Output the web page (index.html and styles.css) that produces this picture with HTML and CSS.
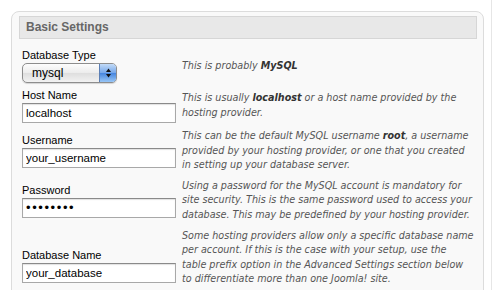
FILE: index.html
```html
<!DOCTYPE html>
<html lang="en">
<head>
    <meta charset="UTF-8">
    <title>Installation - Database Configuration</title>
    <link rel="stylesheet" href="styles.css">
</head>
<body>
    <div class="page">
        <div class="panel">
            <h2 class="panel-title">Basic Settings</h2>

            <div class="settings">
                <div class="setting-row">
                    <div class="field">
                        <label>Database Type</label>
                        <div class="select">
                            <span class="select-value">mysql</span>
                            <span class="stepper">
                                <svg width="7" height="12" viewBox="0 0 7 12">
                                    <path d="M3.5 1.5 L6 5 L1 5 Z" fill="#111"/>
                                    <path d="M3.5 10.5 L6 7 L1 7 Z" fill="#111"/>
                                </svg>
                            </span>
                        </div>
                    </div>
                    <p class="note">This is probably <b>MySQL</b></p>
                </div>

                <div class="setting-row">
                    <div class="field">
                        <label>Host Name</label>
                        <input class="text-input" type="text" value="localhost">
                    </div>
                    <p class="note">This is usually <b>localhost</b> or a host name provided by the hosting provider.</p>
                </div>

                <div class="setting-row">
                    <div class="field">
                        <label>Username</label>
                        <input class="text-input" type="text" value="your_username">
                    </div>
                    <p class="note">This can be the default MySQL username <b>root</b>, a username provided by your hosting provider, or one that you created in setting up your database server.</p>
                </div>

                <div class="setting-row">
                    <div class="field">
                        <label>Password</label>
                        <input class="text-input password" type="password" value="password">
                    </div>
                    <p class="note">Using a password for the MySQL account is mandatory for site security. This is the same password used to access your database. This may be predefined by your hosting provider.</p>
                </div>

                <div class="setting-row row-low">
                    <div class="field">
                        <label>Database Name</label>
                        <input class="text-input" type="text" value="your_database">
                    </div>
                    <p class="note">Some hosting providers allow only a specific database name per account. If this is the case with your setup, use the<br>table prefix option in the Advanced Settings section below to differentiate more than one Joomla! site.</p>
                </div>
            </div>
        </div>
    </div>
</body>
</html>
```

FILE: styles.css
```css
body {
    margin: 0;
    padding: 0;
    background-color: #fff;
    font-family: 'Liberation Sans', Arial, sans-serif;
    overflow: hidden;
}

.page {
    width: 492px;
    height: 290px;
    border-right: 1px solid #e6e6e6;
    padding: 11px 0 0 11px;
    box-sizing: border-box;
}

.panel {
    width: 473px;
    height: 400px;
    border: 1px solid #dcdcdc;
    border-radius: 8px;
    background-color: #f9f9f9;
    padding: 4px 6px 0 7px;
    box-sizing: border-box;
}

.panel-title {
    margin: 0;
    height: 23px;
    line-height: 21px;
    padding-left: 6px;
    border: 1px solid #d6d6d6;
    background-color: #e8e8e8;
    box-sizing: border-box;
    font-size: 12px;
    font-weight: bold;
    color: #666;
}

/* rows: label + field on the left, help text on the right */
.settings {
    display: flex;
    flex-direction: column;
    gap: 6px;
    margin-top: 10px;
    padding-left: 3px;
}

.setting-row {
    display: flex;
    align-items: center;
}

.field {
    width: 160px;
    flex-shrink: 0;
}

.row-low .field {
    padding-top: 16px;
}

.field label {
    display: block;
    font-size: 11px;
    line-height: 13px;
    color: #000;
    margin-bottom: 1px;
}

.note {
    margin: 0;
    width: 30.4em;
    font-family: 'DejaVu Sans', Verdana, sans-serif;
    font-style: italic;
    font-size: 9.6px;
    line-height: 14.6px;
    color: #555;
}

.note b {
    color: #333;
}

.text-input {
    display: block;
    width: 154px;
    height: 20px;
    margin: 0;
    padding: 0 3px;
    border: 1px solid #a8a8a8;
    border-top-color: #8a8a8a;
    box-shadow: inset 0 1px 1px rgba(0, 0, 0, 0.12);
    box-sizing: border-box;
    background-color: #fff;
    font-family: 'Liberation Sans', Arial, sans-serif;
    font-size: 11.5px;
    color: #000;
    outline: none;
}

.text-input.password {
    font-size: 13px;
    letter-spacing: 1.6px;
}

.select {
    display: flex;
    width: 95px;
    height: 20px;
    border: 1px solid #8d8d8d;
    border-radius: 5px;
    background: linear-gradient(#fdfdfd, #ececec 50%, #dedede 51%, #f2f2f2);
    box-sizing: border-box;
    overflow: hidden;
    box-shadow: 0 1px 1px rgba(0, 0, 0, 0.15);
}

.select-value {
    flex: 1;
    padding-left: 9px;
    font-size: 12px;
    line-height: 18px;
    color: #000;
}

.stepper {
    width: 16px;
    display: flex;
    justify-content: center;
    align-items: center;
    border-left: 1px solid #5b7fb5;
    background: linear-gradient(#c3dbf7, #74a6ea 50%, #4585df 51%, #98c6f6);
}
```
